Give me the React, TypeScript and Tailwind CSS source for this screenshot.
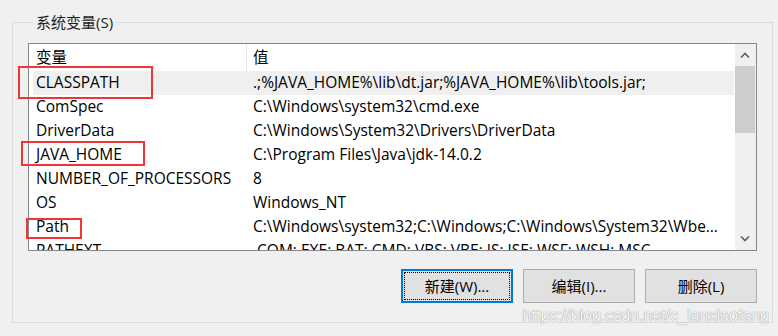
import React from 'react'

const rows: [string, string][] = [
  ['CLASSPATH', '.;%JAVA_HOME%\\lib\\dt.jar;%JAVA_HOME%\\lib\\tools.jar;'],
  ['ComSpec', 'C:\\Windows\\system32\\cmd.exe'],
  ['DriverData', 'C:\\Windows\\System32\\Drivers\\DriverData'],
  ['JAVA_HOME', 'C:\\Program Files\\Java\\jdk-14.0.2'],
  ['NUMBER_OF_PROCESSORS', '8'],
  ['OS', 'Windows_NT'],
  ['Path', 'C:\\Windows\\system32;C:\\Windows;C:\\Windows\\System32\\Wbem;C:\\Windows\\System32\\WindowsPowerShell\\v1.0\\'],
  ['PATHEXT', '.COM;.EXE;.BAT;.CMD;.VBS;.VBE;.JS;.JSE;.WSF;.WSH;.MSC'],
]

function Chevron({ down }: { down?: boolean }) {
  return (
    <svg width="10" height="6" viewBox="0 0 10 6" className={down ? 'rotate-180' : ''}>
      <path d="M1 5.5 L5 1.5 L9 5.5" fill="none" stroke="#606060" strokeWidth="1.6" />
    </svg>
  )
}

function Btn({ label, focused }: { label: string; focused?: boolean }) {
  if (focused) {
    return (
      <div className="flex h-[34px] w-[112px] items-center justify-center border-2 border-[#0078d7] bg-[#e1e1e1] p-[1px]">
        <div className="flex h-full w-full items-center justify-center border border-dotted border-black">{label}</div>
      </div>
    )
  }
  return (
    <div className="flex h-[34px] w-[112px] items-center justify-center border border-[#adadad] bg-[#e1e1e1]">{label}</div>
  )
}

export default function App() {
  return (
    <div className="relative h-[336px] w-[778px] overflow-hidden bg-[#f0f0f0] pt-[12px] font-['Open_Sans','Noto_Sans_CJK_SC',sans-serif] text-[15.5px] text-black">
      <fieldset className="ml-[12px] w-[761px] border border-[#dcdcdc] pr-[15px] pb-[19px] pl-[15px]">
        <legend className="ml-[5px] px-[3px] text-[15px] leading-[20px] text-[#1e1e1e]">系统变量(S)</legend>

        <div className="mt-[11px] flex h-[208px] w-[729px] border border-[#828790] bg-white">
          <div className="flex-1 overflow-hidden">
            <div className="flex h-[27px] items-center pl-[4px]">
              <div className="flex h-full w-[214px] items-center border-r border-[#e5e5e5] pl-[3px]">变量</div>
              <div className="pl-[6px]">值</div>
            </div>
            {rows.map(([k, v], i) => (
              <div key={k} className={`mr-[1px] ml-[4px] flex h-[24px] items-center ${i === 0 ? 'bg-[#efefef]' : ''}`}>
                <div className="w-[214px] shrink-0 truncate pl-[3px]">{k}</div>
                <div className="min-w-0 flex-1 truncate pr-[8px] pl-[6px]">{v}</div>
              </div>
            ))}
          </div>
          <div className="flex w-[21px] flex-col bg-[#f0f0f0]">
            <div className="flex h-[22px] items-center justify-center pr-[1px]">
              <Chevron />
            </div>
            <div className="h-[67px] w-[20px] bg-[#cdcdcd]" />
            <div className="flex-1" />
            <div className="flex h-[22px] items-center justify-center pr-[1px]">
              <Chevron down />
            </div>
          </div>
        </div>

        <div className="mt-[18px] flex justify-end gap-[10px] text-[15px]">
          <Btn label="新建(W)..." focused />
          <Btn label="编辑(I)..." />
          <Btn label="删除(L)" />
        </div>
      </fieldset>

      {/* annotation boxes */}
      <div className="absolute top-[66px] left-[18px] h-[33px] w-[135px] border-2 border-[#ef3535]" />
      <div className="absolute top-[141px] left-[21px] h-[25px] w-[124px] border-2 border-[#ef3535]" />
      <div className="absolute top-[218px] left-[26px] h-[21px] w-[56px] border-2 border-[#ef3535]" />

      <div className="absolute top-[305px] right-[9px] font-['Liberation_Sans',sans-serif] text-[16px] leading-[22px] text-[#f7f7f7] [text-shadow:0_0_1px_#9a9a9a,0_0_1px_#9a9a9a]">
        https://blog.csdn.net/c_lanxiaofang
      </div>
    </div>
  )
}
